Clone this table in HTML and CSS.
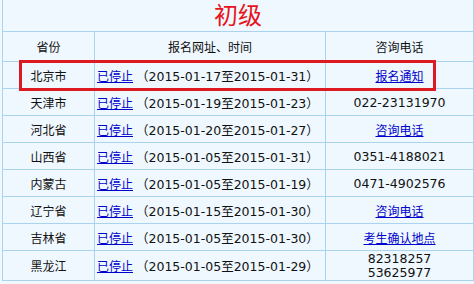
FILE: index.html
```html
<!DOCTYPE html>
<html lang="zh-CN">
<head>
<meta charset="utf-8">
<title>初级</title>
<link rel="stylesheet" href="styles.css">
</head>
<body>
<div class="wrap">
  <div class="grid">
    <div class="cell title">初级</div>
    <div class="cell head">省份</div>
    <div class="cell head">报名网址、时间</div>
    <div class="cell head">咨询电话</div>

    <div class="cell prov">北京市</div>
    <div class="cell date"><a href="#">已停止</a> <span class="range">（2015-01-17至2015-01-31）</span></div>
    <div class="cell tel"><a href="#">报名通知</a></div>

    <div class="cell prov">天津市</div>
    <div class="cell date"><a href="#">已停止</a> <span class="range">（2015-01-19至2015-01-23）</span></div>
    <div class="cell tel">022-23131970</div>

    <div class="cell prov">河北省</div>
    <div class="cell date"><a href="#">已停止</a> <span class="range">（2015-01-20至2015-01-27）</span></div>
    <div class="cell tel"><a href="#">咨询电话</a></div>

    <div class="cell prov">山西省</div>
    <div class="cell date"><a href="#">已停止</a> <span class="range">（2015-01-05至2015-01-31）</span></div>
    <div class="cell tel">0351-4188021</div>

    <div class="cell prov">内蒙古</div>
    <div class="cell date"><a href="#">已停止</a> <span class="range">（2015-01-05至2015-01-19）</span></div>
    <div class="cell tel">0471-4902576</div>

    <div class="cell prov">辽宁省</div>
    <div class="cell date"><a href="#">已停止</a> <span class="range">（2015-01-15至2015-01-30）</span></div>
    <div class="cell tel"><a href="#">咨询电话</a></div>

    <div class="cell prov">吉林省</div>
    <div class="cell date"><a href="#">已停止</a> <span class="range">（2015-01-05至2015-01-30）</span></div>
    <div class="cell tel"><a href="#">考生确认地点</a></div>

    <div class="cell prov">黑龙江</div>
    <div class="cell date"><a href="#">已停止</a> <span class="range">（2015-01-05至2015-01-29）</span></div>
    <div class="cell tel multi">82318257<br>53625977</div>
  </div>
  <div class="highlight"></div>
</div>
</body>
</html>
```
FILE: styles.css
```css
html, body {
  margin: 0;
  padding: 0;
  background: #eff8ff;
}
body {
  font-family: "DejaVu Sans", "Noto Sans CJK SC", sans-serif;
  font-size: 12.5px;
  color: #111;
}
.wrap {
  position: relative;
  margin-left: 2px;
  width: 472px;
}
.grid {
  display: grid;
  grid-template-columns: 91px 230px 147px;
  grid-template-rows: 31px 29px repeat(7, 26px) 29px;
  gap: 1px;
  padding: 0 1px 1px 1px;
  background: #a9d3ef;
}
.cell {
  background: #eff8ff;
  display: flex;
  align-items: center;
  justify-content: center;
  white-space: nowrap;
}
.title {
  grid-column: 1 / -1;
  align-items: flex-start;
  color: #e8141c;
  font-family: "Noto Sans CJK SC", sans-serif;
  font-size: 24px;
  line-height: 1.15;
}
.head {
  font-family: "Noto Sans CJK SC", sans-serif;
  font-size: 12px;
}
.prov {
  font-family: "Noto Sans CJK SC", sans-serif;
  font-size: 12px;
}
.date {
  justify-content: flex-start;
  padding-left: 2px;
  gap: 3px;
}
.date a, .tel a {
  font-family: "Noto Sans CJK SC", sans-serif;
  font-size: 12px;
}
a {
  color: #0000cc;
  text-decoration: underline;
}
.multi {
  line-height: 14px;
  text-align: center;
}
.highlight {
  position: absolute;
  left: 17px;
  top: 60px;
  width: 411px;
  height: 25px;
  border: 3px solid #dd1a22;
}
```
